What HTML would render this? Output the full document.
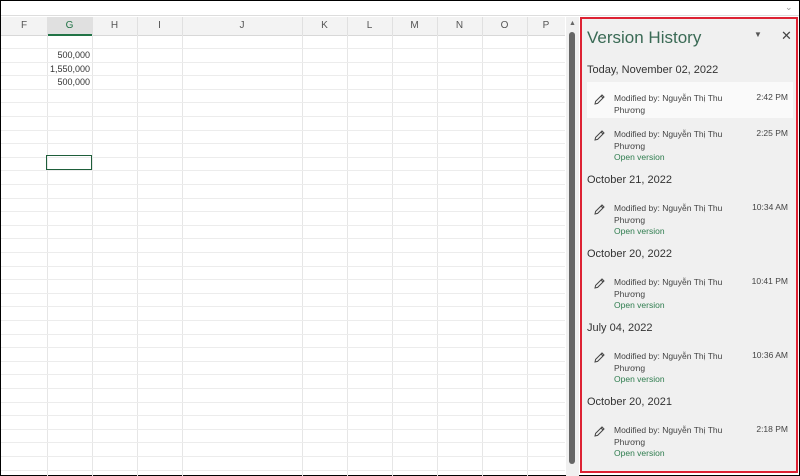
<!DOCTYPE html><html><head><style>
body{margin:0;width:800px;height:476px;overflow:hidden;background:#fff;font-family:"Liberation Sans","Noto Sans CJK SC",sans-serif;position:relative}
.a{position:absolute}
.frame{left:0;top:0;width:798px;height:474px;border:1px solid #000;box-sizing:content-box}
.hdr{left:1px;top:17px;width:564px;height:18px;background:#f3f3f3;border-bottom:1px solid #d8d8d8}
.col{top:17px;height:18px;font-size:10px;color:#555;text-align:center;line-height:18px;border-right:1px solid #e0e0e0}
.vl{top:35px;width:1px;height:441px;background:#e6e6e6}
.hl{left:1px;width:564px;height:1px;background:#ececec}
.num{font-size:9px;color:#333;text-align:right;width:44px;left:46px}
.panel{left:580px;top:17px;width:214px;height:452px;border:2px solid #d23;background:#f0f0f0}
.d{font-size:11px;color:#333;left:587px}
.m{font-size:8.5px;color:#444;left:614px;line-height:12px}
.t{font-size:8.5px;color:#444;right:12px}
.o{font-size:8.5px;color:#2f7d4f;left:614px}
</style></head><body>
<div class="a frame"></div>
<div class="a" style="left:1px;top:15px;width:798px;height:1px;background:#ddd"></div>
<div class="a" style="left:785px;top:2px;font-size:9px;color:#999">&#8964;</div>
<div class="a hdr"></div>
<div class="a" style="left:47px;top:17px;width:45px;height:17px;background:#e0e0e0;border-bottom:2px solid #217346"></div>
<div class="a col" style="left:1px;width:46px">F</div>
<div class="a col" style="left:47px;width:45px;color:#217346">G</div>
<div class="a col" style="left:92px;width:45px">H</div>
<div class="a col" style="left:137px;width:45px">I</div>
<div class="a col" style="left:182px;width:120px">J</div>
<div class="a col" style="left:302px;width:45px">K</div>
<div class="a col" style="left:347px;width:45px">L</div>
<div class="a col" style="left:392px;width:45px">M</div>
<div class="a col" style="left:437px;width:45px">N</div>
<div class="a col" style="left:482px;width:45px">O</div>
<div class="a col" style="left:527px;width:38px;border:0">P</div>
<div class="a vl" style="left:47px"></div><div class="a vl" style="left:92px"></div><div class="a vl" style="left:137px"></div><div class="a vl" style="left:182px"></div><div class="a vl" style="left:302px"></div><div class="a vl" style="left:347px"></div><div class="a vl" style="left:392px"></div><div class="a vl" style="left:437px"></div><div class="a vl" style="left:482px"></div><div class="a vl" style="left:527px"></div>
<div id="rows"></div>
<script>
var s='';for(var y=48;y<476;y+=13.6){s+='<div class="a hl" style="top:'+Math.round(y)+'px"></div>'}document.getElementById('rows').innerHTML=s;
</script>
<div class="a num" style="top:50px">500,000</div>
<div class="a num" style="top:64px">1,550,000</div>
<div class="a num" style="top:77px">500,000</div>
<div class="a" style="left:46px;top:155px;width:44px;height:13px;border:1px solid #1e5e3a"></div>
<div class="a" style="left:566px;top:17px;width:13px;height:459px;background:#f0f0f0"></div>
<div class="a" style="left:569px;top:32px;width:6px;height:432px;background:#666;border-radius:3px"></div>
<div class="a" style="left:569px;top:20px;font-size:7px;color:#666">▲</div>
<div class="a panel"></div>
<div class="a" style="left:587px;top:28px;font-size:17px;color:#3a6a55">Version History</div>
<div class="a" style="left:754px;top:30px;font-size:8px;color:#555">▼</div>
<div class="a" style="left:781px;top:28px;font-size:13px;color:#444">✕</div>
<div class="a" style="left:587px;top:82px;width:206px;height:36px;background:#fafafa"></div>
<div id="p"></div>
<script>
var dates=[[71,'Today, November 02, 2022'],[181,'October 21, 2022'],[255,'October 20, 2022'],[329,'July 04, 2022'],[403,'October 20, 2021']];
var items=[[92,'2:42 PM',0],[128,'2:25 PM',1],[202,'10:34 AM',1],[276,'10:41 PM',1],[350,'10:36 AM',1],[424,'2:18 PM',1]];
var h='';
dates.forEach(function(d){h+='<div class="a d" style="top:'+(d[0]-7)+'px">'+d[1]+'</div>'});
items.forEach(function(i){var y=i[0];
h+='<svg class="a" style="left:593px;top:'+(y+1)+'px" width="13" height="13" viewBox="0 0 13 13"><path d="M2 11 L2.6 8.4 L9 2 L11 4 L4.6 10.4 Z M8 3 L10 5" fill="none" stroke="#444" stroke-width="1"/></svg>';
h+='<div class="a m" style="top:'+y+'px">Modified by: Nguyễn Thị Thu<br>Phương</div>';
h+='<div class="a t" style="top:'+y+'px">'+i[1]+'</div>';
if(i[2])h+='<div class="a o" style="top:'+(y+24)+'px">Open version</div>';});
document.getElementById('p').innerHTML=h;
</script>
</body></html>
